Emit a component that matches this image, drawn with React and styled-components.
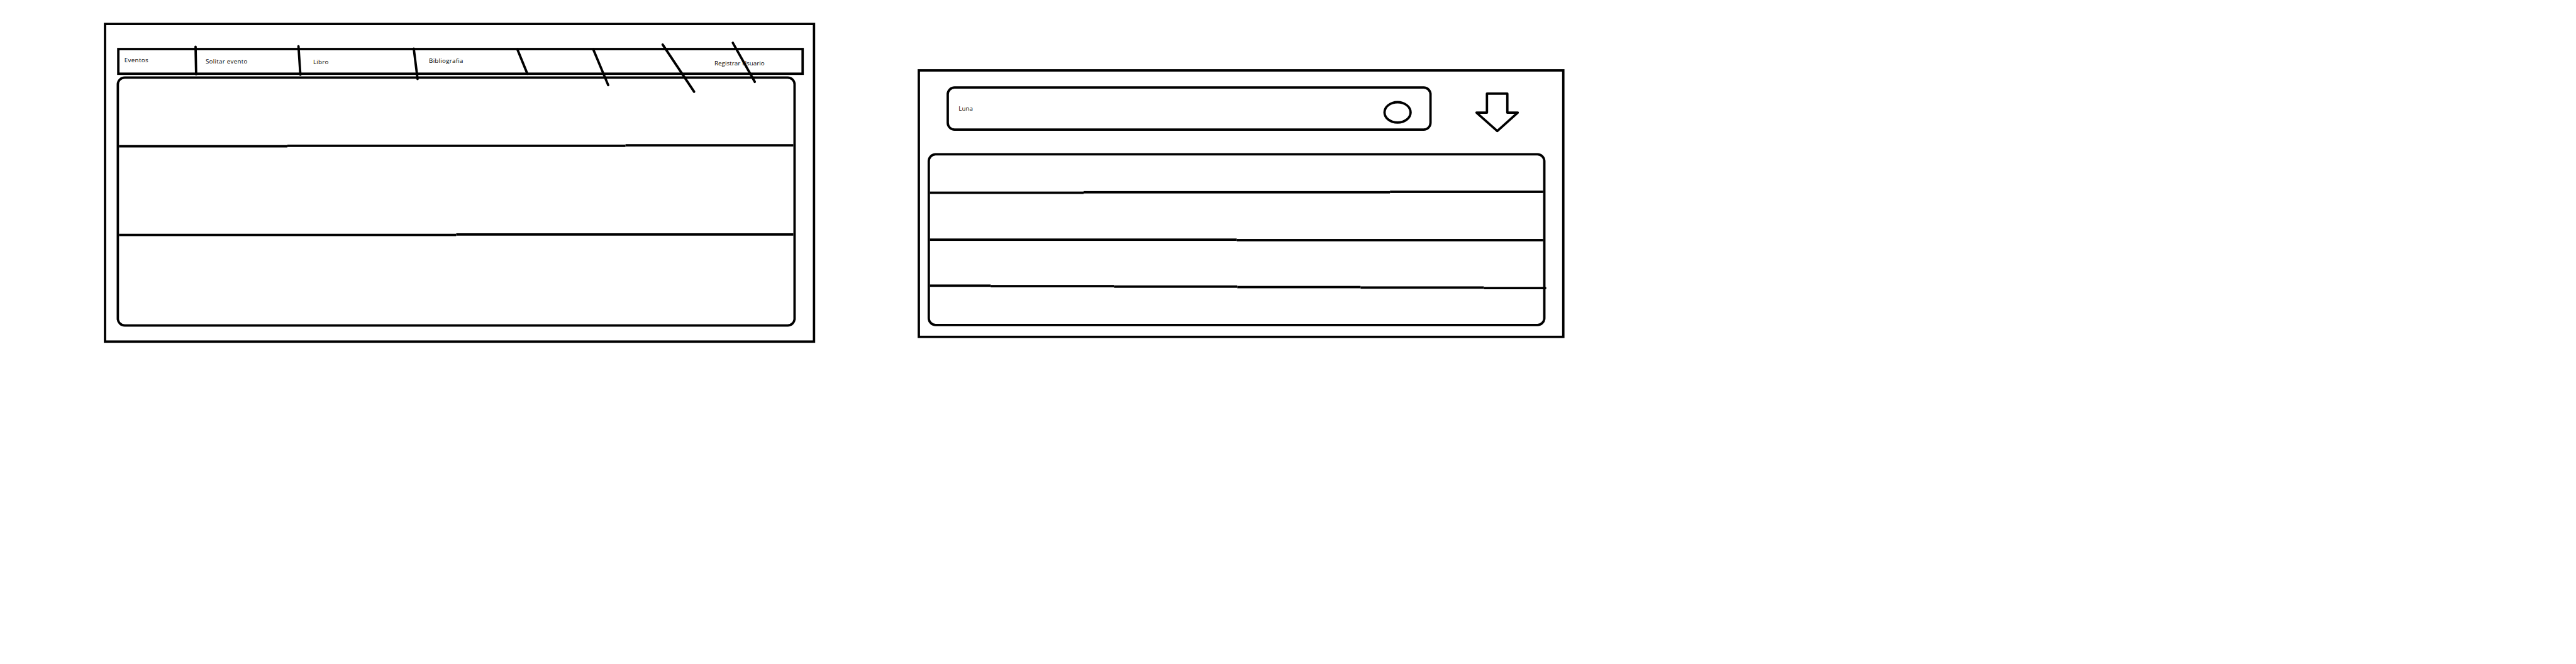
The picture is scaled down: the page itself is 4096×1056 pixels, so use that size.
import React from "react";
import styled, { createGlobalStyle } from "styled-components";

const INK = "#000";
const STROKE = 5;

const GlobalStyle = createGlobalStyle`
  html, body { margin: 0; background: #fff; }
  body { overflow: hidden; }
  *, *::before, *::after { box-sizing: border-box; }
`;

const Viewport = styled.main`
  width: 4096px;
  height: 1056px;
  overflow: hidden;
  background: #fff;
`;

/* The board is laid out at 5432 x 1400 and scaled to the viewport. */
const Board = styled.div`
  display: flex;
  align-items: flex-start;
  gap: 216px;
  width: 5432px;
  height: 1400px;
  padding-left: 219px;
  transform: scale(${4096 / 5432});
  transform-origin: 0 0;
  font-family: "Open Sans", "Noto Sans", sans-serif;
  color: ${INK};
`;

const Frame = styled.section`
  display: flex;
  flex-direction: column;
  flex: none;
  border: ${STROKE}px solid ${INK};
`;

const EventsFrame = styled(Frame)`
  width: 1500px;
  height: 675px;
  margin-top: 48px;
  padding: 48px 0 0 22px;
`;

const SearchFrame = styled(Frame)`
  width: 1364px;
  height: 567px;
  margin-top: 146px;
  padding: 31px 0 0 16px;
`;

const NavBar = styled.nav`
  position: relative;
  display: flex;
  width: 1448px;
  height: 57px;
  margin-left: 1px;
  border: ${STROKE}px solid ${INK};
`;

const NavCell = styled.div`
  flex: ${(p) => (p.$width ? `0 0 ${p.$width}px` : "1")};
  padding: ${(p) => p.$top || 0}px 0 0 ${(p) => p.$left || 0}px;
`;

const Label = styled.span`
  display: block;
  font-size: 13px;
  line-height: 16px;
  letter-spacing: ${(p) => p.$tracking}px;
  white-space: nowrap;
`;

const Strokes = styled.svg`
  position: absolute;
  top: 0;
  left: 0;
  width: 1438px;
  height: 47px;
  overflow: visible;
  fill: none;
  stroke: ${INK};
  stroke-width: ${STROKE};
  stroke-linecap: round;
`;

const Panel = styled.div`
  display: flex;
  flex-direction: column;
  width: ${(p) => p.$width}px;
  height: ${(p) => p.$height}px;
  margin-top: ${(p) => p.$gap}px;
  border: ${STROKE}px solid ${INK};
  border-radius: 17px;
`;

const Row = styled.div`
  flex: ${(p) => (p.$height ? `0 0 ${p.$height}px` : "1")};
`;

const Rule = styled.div`
  display: flex;
  flex: none;
  height: ${(p) => p.$height}px;
  margin-right: ${(p) => -(p.$overhang || 0)}px;
`;

const RulePart = styled.span`
  flex: ${(p) => (p.$width ? `0 0 ${p.$width}px` : "1")};
  height: ${STROKE}px;
  margin-top: ${(p) => p.$drop}px;
  background: ${INK};
  border-radius: ${(p) => (p.$cap ? "0 2.5px 2.5px 0" : "0")};
`;

const SearchRow = styled.div`
  display: flex;
  align-items: flex-start;
  padding-left: 40px;
`;

const SearchField = styled.div`
  display: flex;
  justify-content: space-between;
  align-items: flex-start;
  width: 1023px;
  height: 94px;
  padding: 26px 37px 0 20.5px;
  border: ${STROKE}px solid ${INK};
  border-radius: 17px;
`;

const Query = styled.div`
  padding-top: 8px;
`;

const SearchKnob = styled.span`
  width: 60px;
  height: 48px;
  border: ${STROKE}px solid ${INK};
  border-radius: 50%;
`;

const DownArrow = styled.svg`
  width: 92px;
  height: 84px;
  margin: 13px 0 0 92px;
  fill: none;
  stroke: ${INK};
  stroke-width: ${STROKE};
  stroke-linejoin: round;
`;

const navItems = [
  { label: "Eventos", width: 161, top: 11.9, left: 10.3, tracking: 0.42 },
  { label: "Solitar evento", width: 219, top: 14.9, left: 20.6, tracking: 0.34 },
  { label: "Libro", width: 245, top: 15.9, left: 28.5, tracking: 0.25 },
  { label: "Bibliografia", width: 224, top: 13.9, left: 27.5, tracking: 0.34 },
  { width: 166 },
  { width: 163 },
  { label: "Registrar Usuario", top: 18.9, left: 76.5, tracking: 0.05 },
];

/* Hand-drawn separators, in the nav bar's inner coordinates. */
const separators = [
  [160.4, -7.5, 161.6, 50.5],
  [377.4, -8.5, 381.4, 51.5],
  [620.5, -3.5, 628.5, 60.5],
  [839, -2, 860, 49.5],
  [999, -2, 1030.5, 73.5],
  [1145.3, -12, 1211.7, 87.5],
  [1293.3, -15.7, 1339.7, 66.7],
];

const eventRows = [
  { height: 138, rule: { height: 7, parts: [[355, 2], [713, 1], [0, 0]] } },
  { height: 181, rule: { height: 6, parts: [[711, 1], [0, 0]] } },
  {},
];

const resultRows = [
  { height: 74, rule: { height: 7, parts: [[324, 2], [646, 1], [0, 0]] } },
  { height: 94, rule: { height: 6, parts: [[647, 0], [0, 1]] } },
  {
    height: 91,
    rule: {
      height: 10,
      overhang: 7,
      parts: [[128, 0], [260, 1], [260, 2], [260, 3], [260, 4], [0, 5]],
    },
  },
  {},
];

function RuledPanel({ rows, width, height, gap }) {
  return (
    <Panel $width={width} $height={height} $gap={gap}>
      {rows.map((row, i) => (
        <React.Fragment key={i}>
          <Row $height={row.height} />
          {row.rule && (
            <Rule $height={row.rule.height} $overhang={row.rule.overhang}>
              {row.rule.parts.map(([w, drop], j) => (
                <RulePart
                  key={j}
                  $width={w}
                  $drop={drop}
                  $cap={!w && Boolean(row.rule.overhang)}
                />
              ))}
            </Rule>
          )}
        </React.Fragment>
      ))}
    </Panel>
  );
}

export default function App() {
  return (
    <Viewport>
      <GlobalStyle />
      <Board>
        <EventsFrame>
          <NavBar>
            {navItems.map((item, i) => (
              <NavCell key={i} $width={item.width} $top={item.top} $left={item.left}>
                {item.label && <Label $tracking={item.tracking}>{item.label}</Label>}
              </NavCell>
            ))}
            <Strokes viewBox="0 0 1438 47">
              {separators.map(([x1, y1, x2, y2]) => (
                <line key={x1} x1={x1} y1={y1} x2={x2} y2={y2} />
              ))}
            </Strokes>
          </NavBar>
          <RuledPanel rows={eventRows} width={1432} height={528} gap={3} />
        </EventsFrame>

        <SearchFrame>
          <SearchRow>
            <SearchField>
              <Query>
                <Label $tracking={0.05}>Luna</Label>
              </Query>
              <SearchKnob />
            </SearchField>
            <DownArrow viewBox="0 0 92 84">
              <path d="M24.5 2.5H67.5V42.5H89.5L46.3 81.3L2.5 42.5H24.5Z" />
            </DownArrow>
          </SearchRow>
          <RuledPanel rows={resultRows} width={1303} height={365} gap={44} />
        </SearchFrame>
      </Board>
    </Viewport>
  );
}
